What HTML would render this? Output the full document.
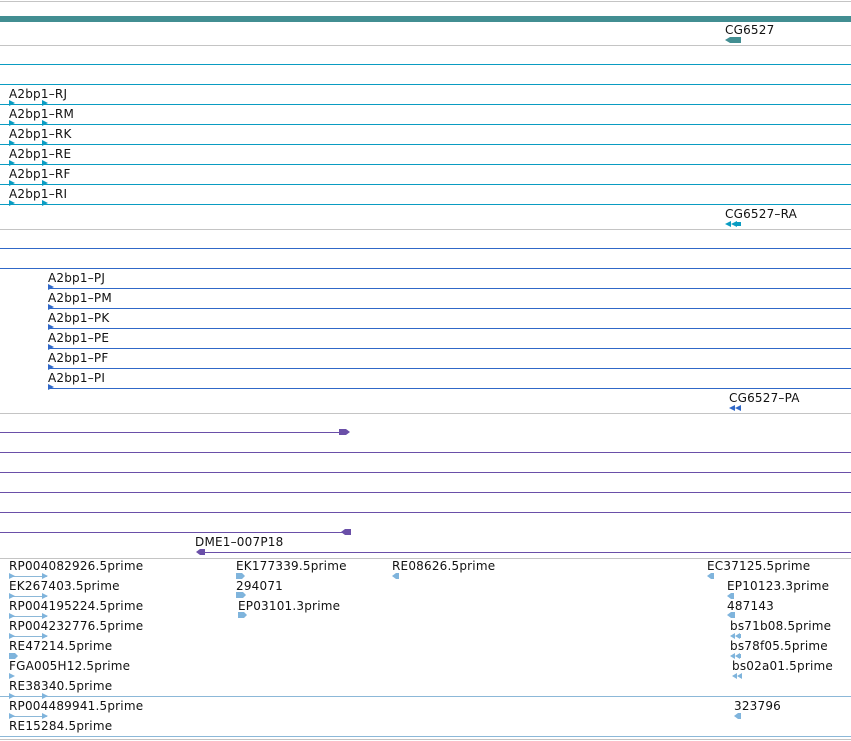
<!DOCTYPE html>
<html><head><meta charset="utf-8"><style>
html,body{margin:0;padding:0;background:#fff;width:851px;height:741px;overflow:hidden}
svg{display:block}
text{font-family:"DejaVu Sans","Liberation Sans",sans-serif;font-size:12px;letter-spacing:0.2px;fill:#111}
</style></head><body>
<svg width="851" height="741" viewBox="0 0 851 741" xmlns="http://www.w3.org/2000/svg">
<defs>
<polygon id="tr" points="0,-3 6,0 0,3"/>
<polygon id="tl" points="0,0 6,-3 6,3"/>
</defs>
<g stroke="#c4c4c4" stroke-width="1">
<line x1="0" y1="1.5" x2="851" y2="1.5"/>
<line x1="0" y1="45.5" x2="851" y2="45.5"/>
<line x1="0" y1="229.5" x2="851" y2="229.5"/>
<line x1="0" y1="413.5" x2="851" y2="413.5"/>
<line x1="0" y1="558.5" x2="851" y2="558.5"/>
<line x1="0" y1="739.5" x2="851" y2="739.5"/>
</g>
<rect x="0" y="16" width="851" height="6" fill="#428e92"/>
<text x="725" y="34">CG6527</text>
<polygon points="725,40 730,37 741,37 741,43 730,43" fill="#428e92"/>

<g stroke="#0a9cc2" stroke-width="1">
<line x1="0" y1="64.5" x2="851" y2="64.5"/><line x1="0" y1="84.5" x2="851" y2="84.5"/>
<line x1="0" y1="104.5" x2="851" y2="104.5"/><line x1="0" y1="124.5" x2="851" y2="124.5"/>
<line x1="0" y1="144.5" x2="851" y2="144.5"/><line x1="0" y1="164.5" x2="851" y2="164.5"/>
<line x1="0" y1="184.5" x2="851" y2="184.5"/><line x1="0" y1="204.5" x2="851" y2="204.5"/>
</g>
<g fill="#0a9cc2">
<use href="#tr" x="9" y="103"/><use href="#tr" x="42" y="103"/>
<use href="#tr" x="9" y="123"/><use href="#tr" x="42" y="123"/>
<use href="#tr" x="9" y="143"/><use href="#tr" x="42" y="143"/>
<use href="#tr" x="9" y="163"/><use href="#tr" x="42" y="163"/>
<use href="#tr" x="9" y="183"/><use href="#tr" x="42" y="183"/>
<use href="#tr" x="9" y="203"/><use href="#tr" x="42" y="203"/>
<polygon points="725,224 731,221 731,227"/><polygon points="731,224 737,221 737,227"/><rect x="735" y="222" width="6" height="4"/>
</g>
<text x="9" y="98">A2bp1–RJ</text><text x="9" y="118">A2bp1–RM</text><text x="9" y="138">A2bp1–RK</text>
<text x="9" y="158">A2bp1–RE</text><text x="9" y="178">A2bp1–RF</text><text x="9" y="198">A2bp1–RI</text>
<text x="725" y="218">CG6527–RA</text>

<g stroke="#3068c8" stroke-width="1">
<line x1="0" y1="248.5" x2="851" y2="248.5"/><line x1="0" y1="268.5" x2="851" y2="268.5"/>
<line x1="48" y1="288.5" x2="851" y2="288.5"/><line x1="48" y1="308.5" x2="851" y2="308.5"/>
<line x1="48" y1="328.5" x2="851" y2="328.5"/><line x1="48" y1="348.5" x2="851" y2="348.5"/>
<line x1="48" y1="368.5" x2="851" y2="368.5"/><line x1="48" y1="388.5" x2="851" y2="388.5"/>
</g>
<g fill="#3068c8">
<use href="#tr" x="48" y="287"/><use href="#tr" x="48" y="307"/><use href="#tr" x="48" y="327"/>
<use href="#tr" x="48" y="347"/><use href="#tr" x="48" y="367"/><use href="#tr" x="48" y="387"/>
<polygon points="729,408 735,405 735,411"/><polygon points="735,408 741,405 741,411"/>
</g>
<text x="48" y="282">A2bp1–PJ</text><text x="48" y="302">A2bp1–PM</text><text x="48" y="322">A2bp1–PK</text>
<text x="48" y="342">A2bp1–PE</text><text x="48" y="362">A2bp1–PF</text><text x="48" y="382">A2bp1–PI</text>
<text x="729" y="402">CG6527–PA</text>

<g stroke="#6a4fa8" stroke-width="1">
<line x1="0" y1="432.5" x2="345" y2="432.5"/>
<line x1="0" y1="452.5" x2="851" y2="452.5"/><line x1="0" y1="472.5" x2="851" y2="472.5"/>
<line x1="0" y1="492.5" x2="851" y2="492.5"/><line x1="0" y1="512.5" x2="851" y2="512.5"/>
<line x1="0" y1="532.5" x2="345" y2="532.5"/>
<line x1="200" y1="552.5" x2="851" y2="552.5"/>
</g>
<g fill="#6a4fa8">
<polygon points="339,429 346,429 350,432 346,435 339,435"/>
<polygon points="341,532 345,529 351,529 351,535 345,535"/>
<polygon points="196,552 200,549 205,549 205,555 200,555"/>
</g>
<text x="195" y="546">DME1–007P18</text>

<g stroke="#8cb8d8" stroke-width="1">
<line x1="0" y1="696.5" x2="851" y2="696.5"/><line x1="0" y1="736.5" x2="851" y2="736.5"/>
<line x1="9" y1="576.5" x2="47" y2="576.5"/><line x1="9" y1="596.5" x2="47" y2="596.5"/>
<line x1="9" y1="616.5" x2="47" y2="616.5"/><line x1="9" y1="636.5" x2="47" y2="636.5"/>
<line x1="9" y1="716.5" x2="47" y2="716.5"/>
</g>
<g fill="#7fb4dc">
<use href="#tr" x="9" y="576"/><use href="#tr" x="42" y="576"/>
<use href="#tr" x="9" y="596"/><use href="#tr" x="42" y="596"/>
<use href="#tr" x="9" y="616"/><use href="#tr" x="42" y="616"/>
<use href="#tr" x="9" y="636"/><use href="#tr" x="42" y="636"/>
<polygon points="9,653 15,653 18,656 15,659 9,659"/>
<use href="#tr" x="9" y="676"/>
<use href="#tr" x="9" y="696"/><use href="#tr" x="42" y="696"/>
<use href="#tr" x="9" y="716"/><use href="#tr" x="42" y="716"/>
<polygon points="236,573 242,573 245,576 242,579 236,579"/>
<polygon points="236,592 243,592 246,595 243,598 236,598"/>
<polygon points="238,612 244,612 247,615 244,618 238,618"/>
<polygon points="392,576 396,573 399,573 399,579 396,579"/>
<polygon points="707,576 711,573 714,573 714,579 711,579"/>
<polygon points="727,596 731,593 734,593 734,599 731,599"/>
<polygon points="727,615 731,612 735,612 735,618 731,618"/>
<polygon points="730,636 735,633 735,639"/><polygon points="735,636 740,633 740,639"/><rect x="738" y="634" width="3" height="4"/>
<polygon points="730,656 735,653 735,659"/><polygon points="735,656 740,653 740,659"/><rect x="738" y="654" width="3" height="4"/>
<polygon points="732,676 737,673 737,679"/><polygon points="737,676 742,673 742,679"/><rect x="740" y="674" width="2" height="4"/>
<polygon points="734,716 738,713 741,713 741,719 738,719"/>
</g>
<text x="9" y="570">RP004082926.5prime</text><text x="9" y="590">EK267403.5prime</text>
<text x="9" y="610">RP004195224.5prime</text><text x="9" y="630">RP004232776.5prime</text>
<text x="9" y="650">RE47214.5prime</text><text x="9" y="670">FGA005H12.5prime</text>
<text x="9" y="690">RE38340.5prime</text><text x="9" y="710">RP004489941.5prime</text>
<text x="9" y="730">RE15284.5prime</text>
<text x="236" y="570">EK177339.5prime</text><text x="236" y="590">294071</text>
<text x="238" y="610">EP03101.3prime</text>
<text x="392" y="570">RE08626.5prime</text>
<text x="707" y="570">EC37125.5prime</text><text x="727" y="590">EP10123.3prime</text>
<text x="727" y="610">487143</text><text x="730" y="630">bs71b08.5prime</text>
<text x="730" y="650">bs78f05.5prime</text><text x="732" y="670">bs02a01.5prime</text>
<text x="734" y="710">323796</text>
</svg>
</body></html>
